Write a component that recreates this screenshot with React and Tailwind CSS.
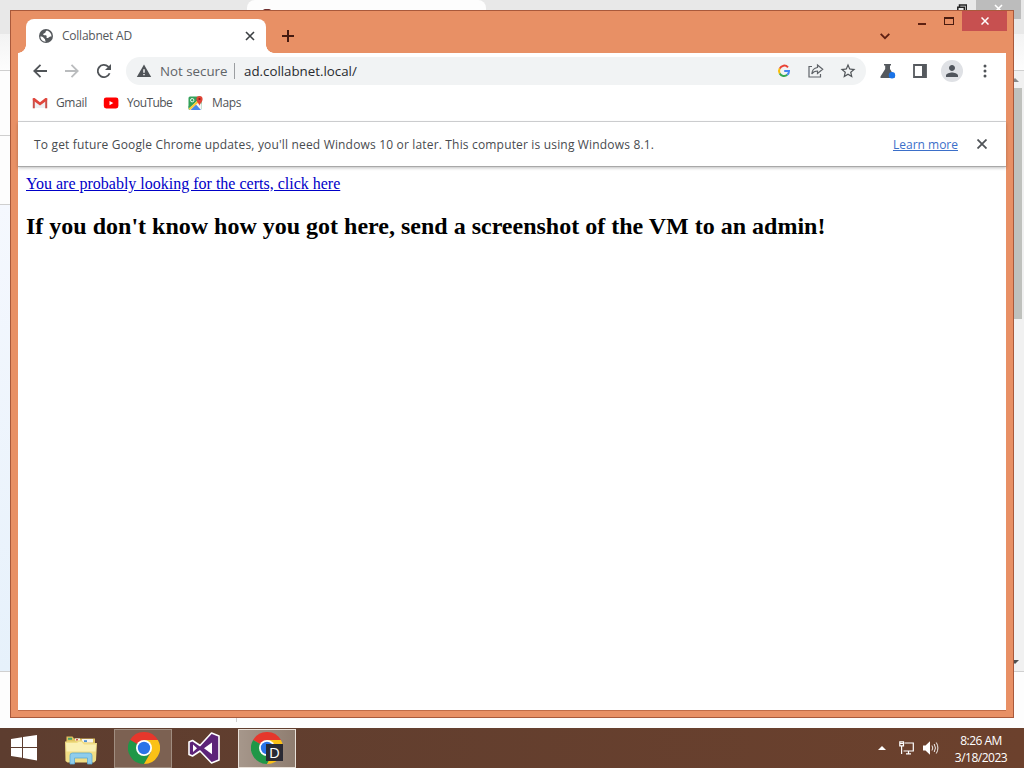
import React from 'react';
import { MdPerson, MdStarBorder } from 'react-icons/md';

const GmailIcon = () => (
  <svg className="w-4 h-4" viewBox="0 0 16 16">
    <path d="M2.5 5v8h11V5L8 9.500z" fill="#eef0f3" />
    <path d="M.8 3.500h2v9.800h-2z" fill="#c9504a" />
    <path d="M13.200 3.500h2v9.800h-2z" fill="#c9504a" />
    <path d="M.8 3.200 2.600 2.900 8 7.300l5.400-4.400 1.800.3v2L8 10.500.8 5.200z" fill="#e0463c" />
  </svg>
);

const YouTubeIcon = () => (
  <svg className="w-4 h-4" viewBox="0 0 16 16">
    <rect x="0.800" y="2.500" width="14.600" height="11" rx="2.400" fill="#f00" />
    <path d="M6.500 5.900v4.400L10.300 8.100z" fill="#fff" />
  </svg>
);

const MapsIcon = () => (
  <svg className="w-4 h-4" viewBox="0 0 16 16">
    <rect x="0.500" y="1.500" width="13" height="13.500" rx="1.500" fill="#34a15b" />
    <path d="M1 13.500 10 5l3.500 4v6H2z" fill="#f4f5f7" />
    <path d="M2.500 15 8 9.500 13 15z" fill="#4a86e8" />
    <path d="M.7 13.500 9.500 5.600 11 7 2 15z" fill="#fbc934" />
    <path d="M.5 11.200V13L9.500 5 8.400 4z" fill="#34a15b" />
    <circle cx="4.200" cy="5.200" r="1.700" fill="none" stroke="#fff" strokeWidth="0.900" />
    <path d="M11.500 11C11.200 8.300 8.400 7.200 8.400 4a3.100 3.100 0 0 1 6.200 0c0 3.200-2.800 4.300-3.100 7z" fill="#e24335" />
    <circle cx="11.500" cy="4" r="1.100" fill="#8c1f18" />
  </svg>
);

const GlobeIcon = () => (
  <svg className="w-4 h-4" viewBox="0 0 16 16">
    <circle cx="8" cy="8" r="7" fill="#55595d" />
    <path d="M9 2.500C7.500 3 7.800 4 7.200 4.800 6.300 5.600 5 5.500 5.200 6.800c.8.900 2.600-.2 3.300.9.500 1-.4 1.500.3 2.200.9.600 1.800-.3 2.600-.9.700-.5 1.200-.6 2.100-.4.200-2.500-1.500-5-4.500-6.100z" fill="#fff" />
    <path d="M2.300 8.500c1.400 0 2.800.2 3.300 1.300.4.900 1.500.9 1.500 2 0 .7.500 1 .5 1.900-2.800.1-5-2.100-5.300-5.200z" fill="#fff" />
  </svg>
);

const WarningIcon = () => (
  <svg className="w-4 h-4" viewBox="0 0 16 16">
    <path d="M8 1.500 15.200 14H.8z" fill="#505458" />
    <path d="M7.300 6.300h1.400v3.400H7.300zM7.300 10.900h1.400v1.400H7.300z" fill="#fff" />
  </svg>
);

const GoogleIcon = () => (
  <svg className="w-[14px] h-[14px]" viewBox="0 0 14 14" fill="none" strokeWidth="2">
    <path d="M11 3.300A5 5 0 0 0 2.700 4.600" stroke="#ea4335" />
    <path d="M2.700 4.600A5 5 0 0 0 2.700 9.500" stroke="#fbbc05" />
    <path d="M2.700 9.500A5 5 0 0 0 10.300 10.800" stroke="#34a853" />
    <path d="M10.300 10.800A5 5 0 0 0 12 7H7.200" stroke="#4285f4" />
  </svg>
);

const ChromeIcon = () => (
  <svg className="w-8 h-8 shrink-0" viewBox="0 0 32 32">
    <path d="M16 16 2.140 8A16 16 0 0 1 29.860 8z" fill="#e6372c" />
    <path d="M16 16 2.140 8A16 16 0 0 0 16 32l6.500-12z" fill="#1f9747" />
    <path d="M16 8H29.860A16 16 0 0 1 16 32l7-12z" fill="#fbc116" />
    <circle cx="16" cy="16" r="8" fill="#fff" />
    <circle cx="16" cy="16" r="6.200" fill="#2b73e8" />
  </svg>
);

const FolderIcon = () => (
  <svg className="w-8 h-[30px]" viewBox="0 0 32 30">
    <path d="M1.500 1.500h6l1.500 2H30V26H1z" fill="#dfc35f" />
    <path d="M3 2.800h4v2H3z" fill="#4ca36a" />
    <path d="M10 3.500h5v2h-5z" fill="#f6f4ee" />
    <path d="M11 4h2v1.500h-2z" fill="#d0574a" />
    <path d="M17 4h11v3.500H17z" fill="#f6f4ee" />
    <path d="M19 5.200h3v1.800h-3z" fill="#4b8fd1" />
    <path d="M0 6.500h11l2-1h4L19.500 8H32l-1 17.500-2 2H2.500L.5 26z" fill="#f0dd85" />
    <path d="M1 8h11l2-1.200h2.500L19 9.500h12l-.5 7H1.500z" fill="#faf0b4" />
    <path d="M5 29V20.500q0-2.500 2.500-2.500h17q2.500 0 2.500 2.500V29h-4.500v-6h-13v6z" fill="#8fcdec" stroke="#5aa9d6" strokeWidth="0.800" />
  </svg>
);

const VisualStudioIcon = () => (
  <svg className="w-8 h-8" viewBox="0 0 32 32">
    <path d="M1 10 4.500 8.500 12 13.500 23.500 1 31 4v24l-7.500 3L12 19l-7.500 5L1 22.500z" fill="#5c2378" stroke="#fff" strokeWidth="1.600" strokeLinejoin="round" />
    <path d="M5 12.500v7.500l4-3.700zM16 16.200l8 6V10.400z" fill="#fff" />
  </svg>
);

// the browser window that stays behind the active one
const BackWindow = () => (
  <div className="absolute inset-x-0 top-0 h-[728px] bg-[#fdfdfd] flex flex-col">
    <div className="h-[34px] shrink-0 bg-[#e8e8e8] flex justify-between">
      <div className="ml-[247px] w-[239px] h-[34px] rounded-t-lg bg-[#fdfdfd] pl-4 pt-[9px]">
        <div className="w-2 h-1 rounded-full bg-[#703030]" />
      </div>
      <div className="flex">
        <svg className="w-[10px] h-[12px] mt-1 mr-[9px]" viewBox="0 0 10 12" fill="none" stroke="#222" strokeWidth="1.500">
          <path d="M2.500 2.500V1h7v7H8M.8 3.200h6.500V10H.8z" />
        </svg>
        <div className="w-[45px] h-[19px] bg-[#bcbcbc] flex justify-center pt-1 mr-[3px]">
          <svg className="w-[9px] h-[9px]" viewBox="0 0 9 9" stroke="#fff" strokeWidth="1.600">
            <path d="M1 1l7 7M8 1 1 8" />
          </svg>
        </div>
      </div>
    </div>
    <div className="h-[37px] shrink-0 border-b border-[#cfcfcf] bg-gradient-to-b from-[#f3f3f3] to-[#fdfdfd]" />
    <div className="h-[601px] shrink-0 flex justify-between border-b border-[#d0d0d0]">
      <div className="w-5 flex flex-col">
        <div className="h-[65px] border-b border-[#cfcfcf]" />
        <div className="h-[69px] border-b border-[#cfcfcf]" />
        <div className="grow bg-gradient-to-b from-[#f5f8fe] to-[#e6f1fb]" />
      </div>
      <div className="w-[13px] bg-[#f1f1f1] flex flex-col">
        <svg className="w-[10px] h-[17px]" viewBox="0 0 10 17"><path d="M0 11h8L4 7z" fill="#8a8a8a" /></svg>
        <div className="w-[11px] h-[231px] bg-[#bfc1bd]" />
        <div className="grow" />
        <svg className="w-[10px] h-[17px]" viewBox="0 0 10 17"><path d="M0 6h8L4 10z" fill="#505050" /></svg>
      </div>
    </div>
    <div className="ml-[236px] w-px h-[50px] bg-[#cfcfcf]" />
  </div>
);

const TabStrip = () => (
  <div className="h-[42px] flex items-start">
    <div className="relative ml-2 mt-2 h-[34px] w-[240px] rounded-t-lg bg-white flex items-center pl-3 pr-[11px]">
      <div className="absolute -left-2 bottom-0 w-2 h-2 bg-[radial-gradient(circle_at_0_0,transparent_7.5px,#fff_8px)]" />
      <div className="absolute -right-2 bottom-0 w-2 h-2 bg-[radial-gradient(circle_at_100%_0,transparent_7.5px,#fff_8px)]" />
      <GlobeIcon />
      <span className="ml-2 grow text-[12px] tracking-[-0.23px] text-[#55585c]">Collabnet AD</span>
      <svg className="w-[10px] h-[10px]" viewBox="0 0 10 10" stroke="#3c4043" strokeWidth="1.600">
        <path d="M1 1l8 8M9 1 1 9" />
      </svg>
    </div>
    <svg className="w-3 h-3 ml-4 mt-[19px]" viewBox="0 0 12 12" stroke="#451a10" strokeWidth="2">
      <path d="M6 0v12M0 6h12" />
    </svg>
    <div className="grow" />
    <svg className="w-[10px] h-[7px] mt-[22px] mr-[28px]" viewBox="0 0 10 7" fill="none" stroke="#5e1f12" strokeWidth="1.800">
      <path d="M.7.8 5 5.200 9.300.8" />
    </svg>
    <div className="w-2 h-[2px] mt-[12px] bg-[#5e2010]" />
    <div className="w-[10px] h-[8px] mt-[6px] ml-[18px] border border-t-2 border-[#4a1c10]" />
    <div className="-mr-px ml-[8px] w-[45px] h-[20px] bg-[#c75050] flex items-center justify-center">
      <svg className="w-2 h-2" viewBox="0 0 8 8" stroke="#fff" strokeWidth="1.500">
        <path d="M.5.5l7 7M7.500.5l-7 7" />
      </svg>
    </div>
  </div>
);

const Toolbar = () => (
  <div className="h-[36px] bg-white flex items-center">
    <svg className="ml-[15px] w-[14px] h-[14px]" viewBox="0 0 14 14" fill="none" stroke="#505458" strokeWidth="1.800">
      <path d="M14 7H1.500M7.500.8 1.300 7l6.200 6.200" />
    </svg>
    <svg className="ml-[18px] w-[14px] h-[14px]" viewBox="0 0 14 14" fill="none" stroke="#babcbe" strokeWidth="1.800">
      <path d="M0 7h12.500M6.500.8 12.700 7l-6.200 6.200" />
    </svg>
    <svg className="ml-[18px] w-[14px] h-[14px]" viewBox="0 0 14 14">
      <path d="M12.600 9.200A6.100 6.100 0 1 1 11.200 2.700L12.600 4" fill="none" stroke="#505458" strokeWidth="1.800" />
      <path d="M14 0v6H8z" fill="#505458" />
    </svg>
    <div className="ml-[15px] w-[740px] h-7 rounded-full bg-[#f1f3f4] flex items-center pl-[10px]">
      <WarningIcon />
      <span className="ml-2 pt-px w-[67px] whitespace-nowrap text-[13.3px] text-[#606468]">Not secure</span>
      <div className="ml-[7px] w-px h-4 bg-[#9b9ea1]" />
      <span className="ml-[9px] pt-px grow text-[13.3px] text-[#282b2f]">ad.collabnet.local/</span>
      <GoogleIcon />
      <svg className="ml-[17px] w-4 h-4" viewBox="0 0 16 16" fill="none" stroke="#5f6368" strokeWidth="1.200">
        <path d="M4 3.500H1V14h11.500v-3M9.500 2l5.200 4.200-5.200 4.300V8C6.500 8 5 9 3.800 11 4 7.500 6 5 9.500 4.500z" />
      </svg>
      <MdStarBorder className="ml-[15px] mr-[9px] w-[18px] h-[18px] text-[#505458]" />
    </div>
    <svg className="ml-[14px] w-4 h-4" viewBox="0 0 16 16">
      <path d="M4 1h7v1.600H10V6l4.500 7.500V15H.5v-1.500L5.200 6V2.600H4z" fill="#55595e" />
      <circle cx="12" cy="12.300" r="3.200" fill="#1a73e8" />
    </svg>
    <svg className="ml-[17px] w-[14px] h-[14px]" viewBox="0 0 14 14">
      <path d="M1 1h12v12H1z" fill="none" stroke="#55595e" strokeWidth="1.800" />
      <path d="M9 1h4v12H9z" fill="#55595e" />
    </svg>
    <div className="ml-[14px] w-[22px] h-[22px] rounded-full bg-[#dfe1e5] flex items-center justify-center">
      <MdPerson className="w-[18px] h-[18px] text-[#50555c]" />
    </div>
    <svg className="ml-[20px] w-[4px] h-[14px]" viewBox="0 0 4 14" fill="#505458">
      <circle cx="2" cy="2" r="1.500" />
      <circle cx="2" cy="7" r="1.500" />
      <circle cx="2" cy="12" r="1.500" />
    </svg>
  </div>
);

const Bookmarks = () => (
  <div className="h-[33px] bg-white border-b border-[#d5d6d8] flex items-center pb-[5px] pl-[14px] text-[12px] text-[#505357]">
    <GmailIcon />
    <span className="ml-2 w-[47px] tracking-[-0.35px]">Gmail</span>
    <YouTubeIcon />
    <span className="ml-2 w-[61px] tracking-[-0.6px]">YouTube</span>
    <MapsIcon />
    <span className="ml-2 tracking-[-0.35px]">Maps</span>
  </div>
);

const InfoBar = () => (
  <div className="relative h-[45px] bg-white shadow-[0_1px_3px_rgba(0,0,0,0.25)] border-b border-[#a8a8a8] flex items-center justify-between pl-4 pr-[19px] text-[12px] text-[#484b4f]">
    <span className="pt-px whitespace-nowrap tracking-[0.17px]">
      To get future Google Chrome updates, you'll need Windows 10 or later. This computer is using Windows 8.1.
    </span>
    <div className="flex items-center">
      <a href="#" className="pt-px underline text-[#3b6fc9]">Learn more</a>
      <svg className="ml-[19px] w-[10px] h-[10px]" viewBox="0 0 10 10" stroke="#505458" strokeWidth="1.800">
        <path d="M.5.5l9 9M9.500.5l-9 9" />
      </svg>
    </div>
  </div>
);

const BrowserWindow = () => (
  <div className="absolute left-[10px] top-[10px] w-[1004px] h-[708px] bg-[#e89065] border border-[#a9593b] px-[7px] pb-[6px] flex flex-col">
    <TabStrip />
    <Toolbar />
    <Bookmarks />
    <InfoBar />
    <div className="grow bg-white border-b border-[#c06c48] px-2 font-['Liberation_Serif',serif] text-black">
      <a href="#" className="block mt-[8px] text-[16px] leading-[18px] underline text-[#0000c8]">
        You are probably looking for the certs, click here
      </a>
      <h1 className="mt-[19px] text-[24px] leading-[28px] font-bold">
        If you don't know how you got here, send a screenshot of the VM to an admin!
      </h1>
    </div>
  </div>
);

const Taskbar = () => (
  <div className="absolute inset-x-0 bottom-0 h-10 bg-gradient-to-r from-[#5d3d2f] to-[#6c412d] flex items-center">
    <svg className="ml-[11px] w-[26px] h-[26px]" viewBox="0 0 26 26" fill="#fff">
      <path d="M0 4 11 2.300V12H0zM12 2.100 26 0v12H12zM0 13h11v9.700L0 21zM12 13h14v12.500L12 23z" />
    </svg>
    <div className="ml-7 mt-[3px]"><FolderIcon /></div>
    <div className="ml-[17px] w-[58px] h-[39px] bg-[#7c6152] border border-[#a08d80] flex items-center justify-center pl-px">
      <ChromeIcon />
    </div>
    <div className="ml-[16px] mr-px"><VisualStudioIcon /></div>
    <div className="relative ml-[17px] w-[58px] h-[39px] bg-gradient-to-r from-[#a6978b] to-[#8f7d70] border border-[#e8e0d8] flex items-center justify-center">
      <ChromeIcon />
      <div className="absolute left-[27px] top-[14px] w-[17px] h-[17px] bg-[#2a2a34] text-white text-[15px] leading-[17px] text-center">D</div>
    </div>
    <div className="grow" />
    <svg className="w-[8px] h-[4px]" viewBox="0 0 8 4"><path d="M0 4 4 0l4 4z" fill="#fff" /></svg>
    <svg className="ml-[13px] w-[15px] h-[14px]" viewBox="0 0 15 14" fill="none" stroke="#fff" strokeWidth="1.200">
      <path d="M5.500 2h8.800v8H4.500M7 12.800h5M9.500 10v3M.8.8h3.700v4H.8zM2.600 5v8M1.200 2.500h3" />
    </svg>
    <svg className="ml-[9px] w-[16px] h-[14px]" viewBox="0 0 16 14">
      <path d="M0 4.500h2.500L7 .3v13.400L2.500 9.500H0z" fill="#fff" />
      <path d="M9 4.500q1.500 2.500 0 5M11.200 3q2.500 4 0 8M13.300 1.500q3.200 5.500 0 11" fill="none" stroke="#fff" strokeWidth="0.900" />
    </svg>
    <div className="ml-[14px] mr-[15px] w-[56px] pt-px text-center text-[12px] leading-[17px] tracking-[-0.5px] whitespace-nowrap text-white">
      <div>8:26 AM</div>
      <div>3/18/2023</div>
    </div>
  </div>
);

export default function App() {
  return (
    <div className="relative w-[1024px] h-[768px] overflow-hidden font-['Open_Sans','Noto_Sans',sans-serif]">
      <BackWindow />
      <BrowserWindow />
      <Taskbar />
    </div>
  );
}
